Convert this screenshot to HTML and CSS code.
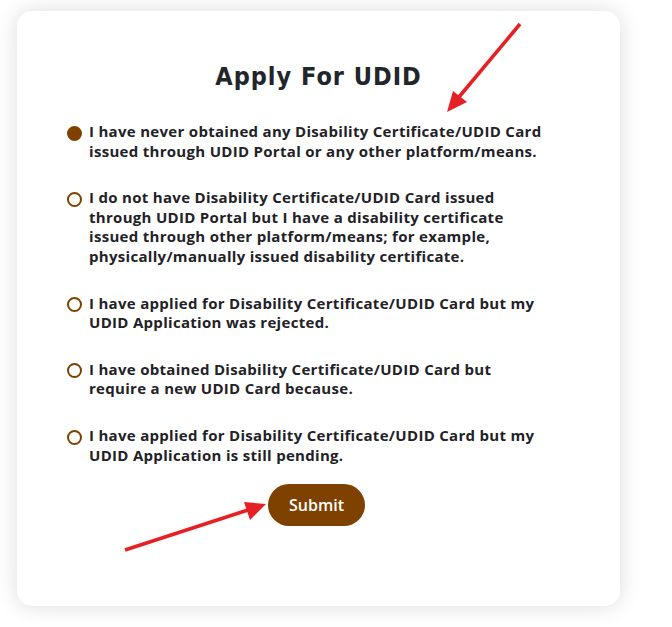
FILE: index.html
```html
<!DOCTYPE html>
<html lang="en">
<head>
<meta charset="utf-8">
<title>Apply For UDID</title>
<link rel="stylesheet" href="styles.css">
</head>
<body>
<div class="page">
  <form class="card">
    <h1 class="title">Apply For UDID</h1>
    <div class="options">
      <label class="option">
        <input type="radio" name="udid" class="radio" checked>
        <span class="option-text">I have never obtained any Disability Certificate/UDID Card issued through UDID Portal or any other platform/means.</span>
      </label>
      <label class="option">
        <input type="radio" name="udid" class="radio">
        <span class="option-text">I do not have Disability Certificate/UDID Card issued through UDID Portal but I have a disability certificate issued through other platform/means; for example, physically/manually issued disability certificate.</span>
      </label>
      <label class="option">
        <input type="radio" name="udid" class="radio">
        <span class="option-text">I have applied for Disability Certificate/UDID Card but my UDID Application was rejected.</span>
      </label>
      <label class="option">
        <input type="radio" name="udid" class="radio">
        <span class="option-text">I have obtained Disability Certificate/UDID Card but require a new UDID Card because.</span>
      </label>
      <label class="option">
        <input type="radio" name="udid" class="radio">
        <span class="option-text">I have applied for Disability Certificate/UDID Card but my UDID Application is still pending.</span>
      </label>
    </div>
    <button type="button" class="submit">Submit</button>
  </form>
</div>
<svg class="annotations" width="672" height="627" viewBox="0 0 672 627" aria-hidden="true">
  <line x1="520" y1="24" x2="459" y2="97" stroke="#e52125" stroke-width="3.6" stroke-linecap="butt"/>
  <polygon points="447,112 453,91 467,102" fill="#e52125"/>
  <line x1="125" y1="550" x2="248" y2="510" stroke="#e52125" stroke-width="3.6" stroke-linecap="butt"/>
  <polygon points="266,504 244,502 250,520" fill="#e52125"/>
</svg>
</body>
</html>
```
FILE: styles.css
```css
html, body {
  margin: 0;
  background: #ffffff;
}

body {
  position: relative;
  font-family: "Open Sans", "Noto Sans", sans-serif;
  color: #212529;
}

.page {
  padding: 11px 52px 20px 17px;
}

.card {
  display: flex;
  flex-direction: column;
  background: #ffffff;
  border-radius: 15px;
  box-shadow: 0 0 22px rgba(0, 0, 0, 0.14);
  padding: 51px 0 80px;
  margin: 0;
}

.title {
  margin: 0;
  text-align: center;
  font-family: "DejaVu Sans Condensed", "DejaVu Sans", sans-serif;
  font-weight: 700;
  font-size: 25px;
  letter-spacing: 1px;
  line-height: 30px;
  color: #22252a;
}

.options {
  display: flex;
  flex-direction: column;
  gap: 27px;
  margin-top: 30px;
  padding-left: 50px;
  width: 480px;
}

.option {
  display: flex;
  align-items: flex-start;
  gap: 7px;
  font-size: 15px;
  font-weight: 700;
  letter-spacing: 0.3px;
  line-height: 19.6px;
  color: #1f2227;
  cursor: pointer;
}

.radio {
  appearance: none;
  -webkit-appearance: none;
  flex: none;
  box-sizing: border-box;
  width: 15px;
  height: 15px;
  margin: 3.6px 0 0;
  border: 2px solid #7e4100;
  border-radius: 50%;
  background: #ffffff;
}

.radio:checked {
  background: #7e4100;
}

.option-text {
  flex: 1;
}

.submit {
  align-self: center;
  margin: 19px 4px 0 0;
  height: 42px;
  padding: 0 21px;
  border: none;
  border-radius: 21px;
  background: #7e4100;
  color: #ffffff;
  font-family: "Open Sans", "Noto Sans", sans-serif;
  font-size: 16px;
  font-weight: 600;
  line-height: 42px;
  cursor: pointer;
}

.annotations {
  position: absolute;
  top: 0;
  left: 0;
  pointer-events: none;
}
```
